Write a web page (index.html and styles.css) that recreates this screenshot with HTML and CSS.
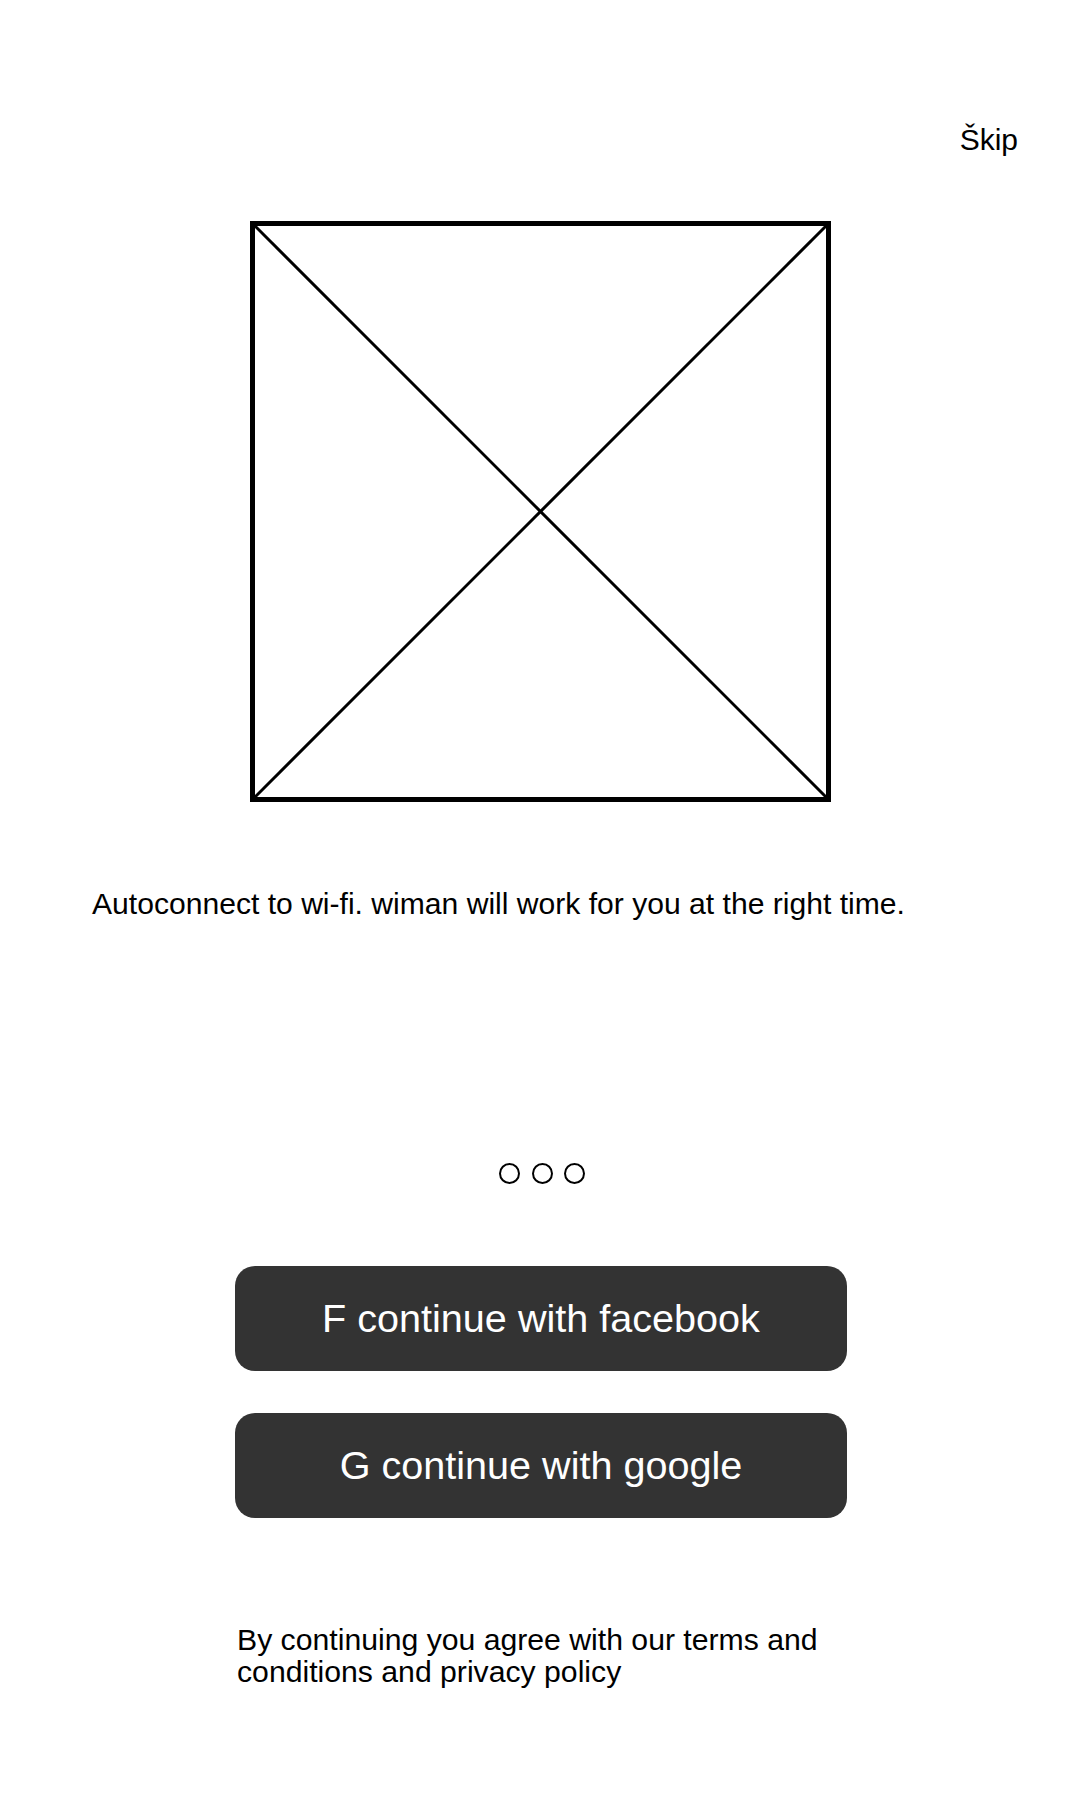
FILE: index.html
```html
<!DOCTYPE html>
<html lang="en">
<head>
<meta charset="utf-8">
<title>wiman onboarding</title>
<link rel="stylesheet" href="styles.css">
</head>
<body>
<div class="screen">
  <header class="top">
    <span class="skip">Škip</span>
  </header>
  <div class="hero">
    <svg class="placeholder" width="581" height="581" viewBox="0 0 581 581">
      <line x1="3" y1="3" x2="578" y2="578" stroke="#000" stroke-width="3"/>
      <line x1="578" y1="3" x2="3" y2="578" stroke="#000" stroke-width="3"/>
      <rect x="2.5" y="2.5" width="576" height="576" fill="none" stroke="#000" stroke-width="5"/>
    </svg>
  </div>
  <p class="tagline">Autoconnect to wi-fi. wiman will work for you at the right time.</p>
  <div class="dots">
    <span class="dot"></span><span class="dot"></span><span class="dot"></span>
  </div>
  <div class="actions">
    <button class="btn">F continue with facebook</button>
    <button class="btn">G continue with google</button>
    <p class="legal">By continuing you agree with our terms and conditions and privacy policy</p>
  </div>
</div>
</body>
</html>
```
FILE: styles.css
```css
html, body {
  margin: 0;
  padding: 0;
  background: #fff;
}
body {
  font-family: "Liberation Sans", Arial, sans-serif;
  color: #000;
}
.screen {
  width: 1080px;
  height: 1800px;
  display: flex;
  flex-direction: column;
}
.top {
  display: flex;
  justify-content: flex-end;
  padding: 125px 62px 0 0;
}
.skip {
  font-size: 30px;
  line-height: 30px;
}
.hero {
  display: flex;
  justify-content: center;
  margin-top: 66px;
  padding-left: 1px;
}
.placeholder {
  display: block;
}
.tagline {
  margin: 87px 0 0 92px;
  font-size: 30.1px;
  line-height: 30px;
}
.dots {
  display: flex;
  justify-content: center;
  gap: 11.5px;
  margin-top: 244px;
  padding-left: 4px;
}
.dot {
  width: 17px;
  height: 17px;
  border: 2.5px solid #000;
  border-radius: 50%;
}
.actions {
  width: 612px;
  margin: 82px auto 0;
  padding-left: 2px;
  display: flex;
  flex-direction: column;
}
.btn {
  height: 105px;
  border: none;
  border-radius: 20px;
  background: #333333;
  color: #fff;
  font-family: "Liberation Sans", Arial, sans-serif;
  font-size: 39.6px;
  padding: 0;
  margin: 0;
}
.btn + .btn {
  margin-top: 42px;
}
.legal {
  margin: 106px 0 0;
  padding-left: 2px;
  font-size: 30.2px;
  line-height: 32px;
}
```
